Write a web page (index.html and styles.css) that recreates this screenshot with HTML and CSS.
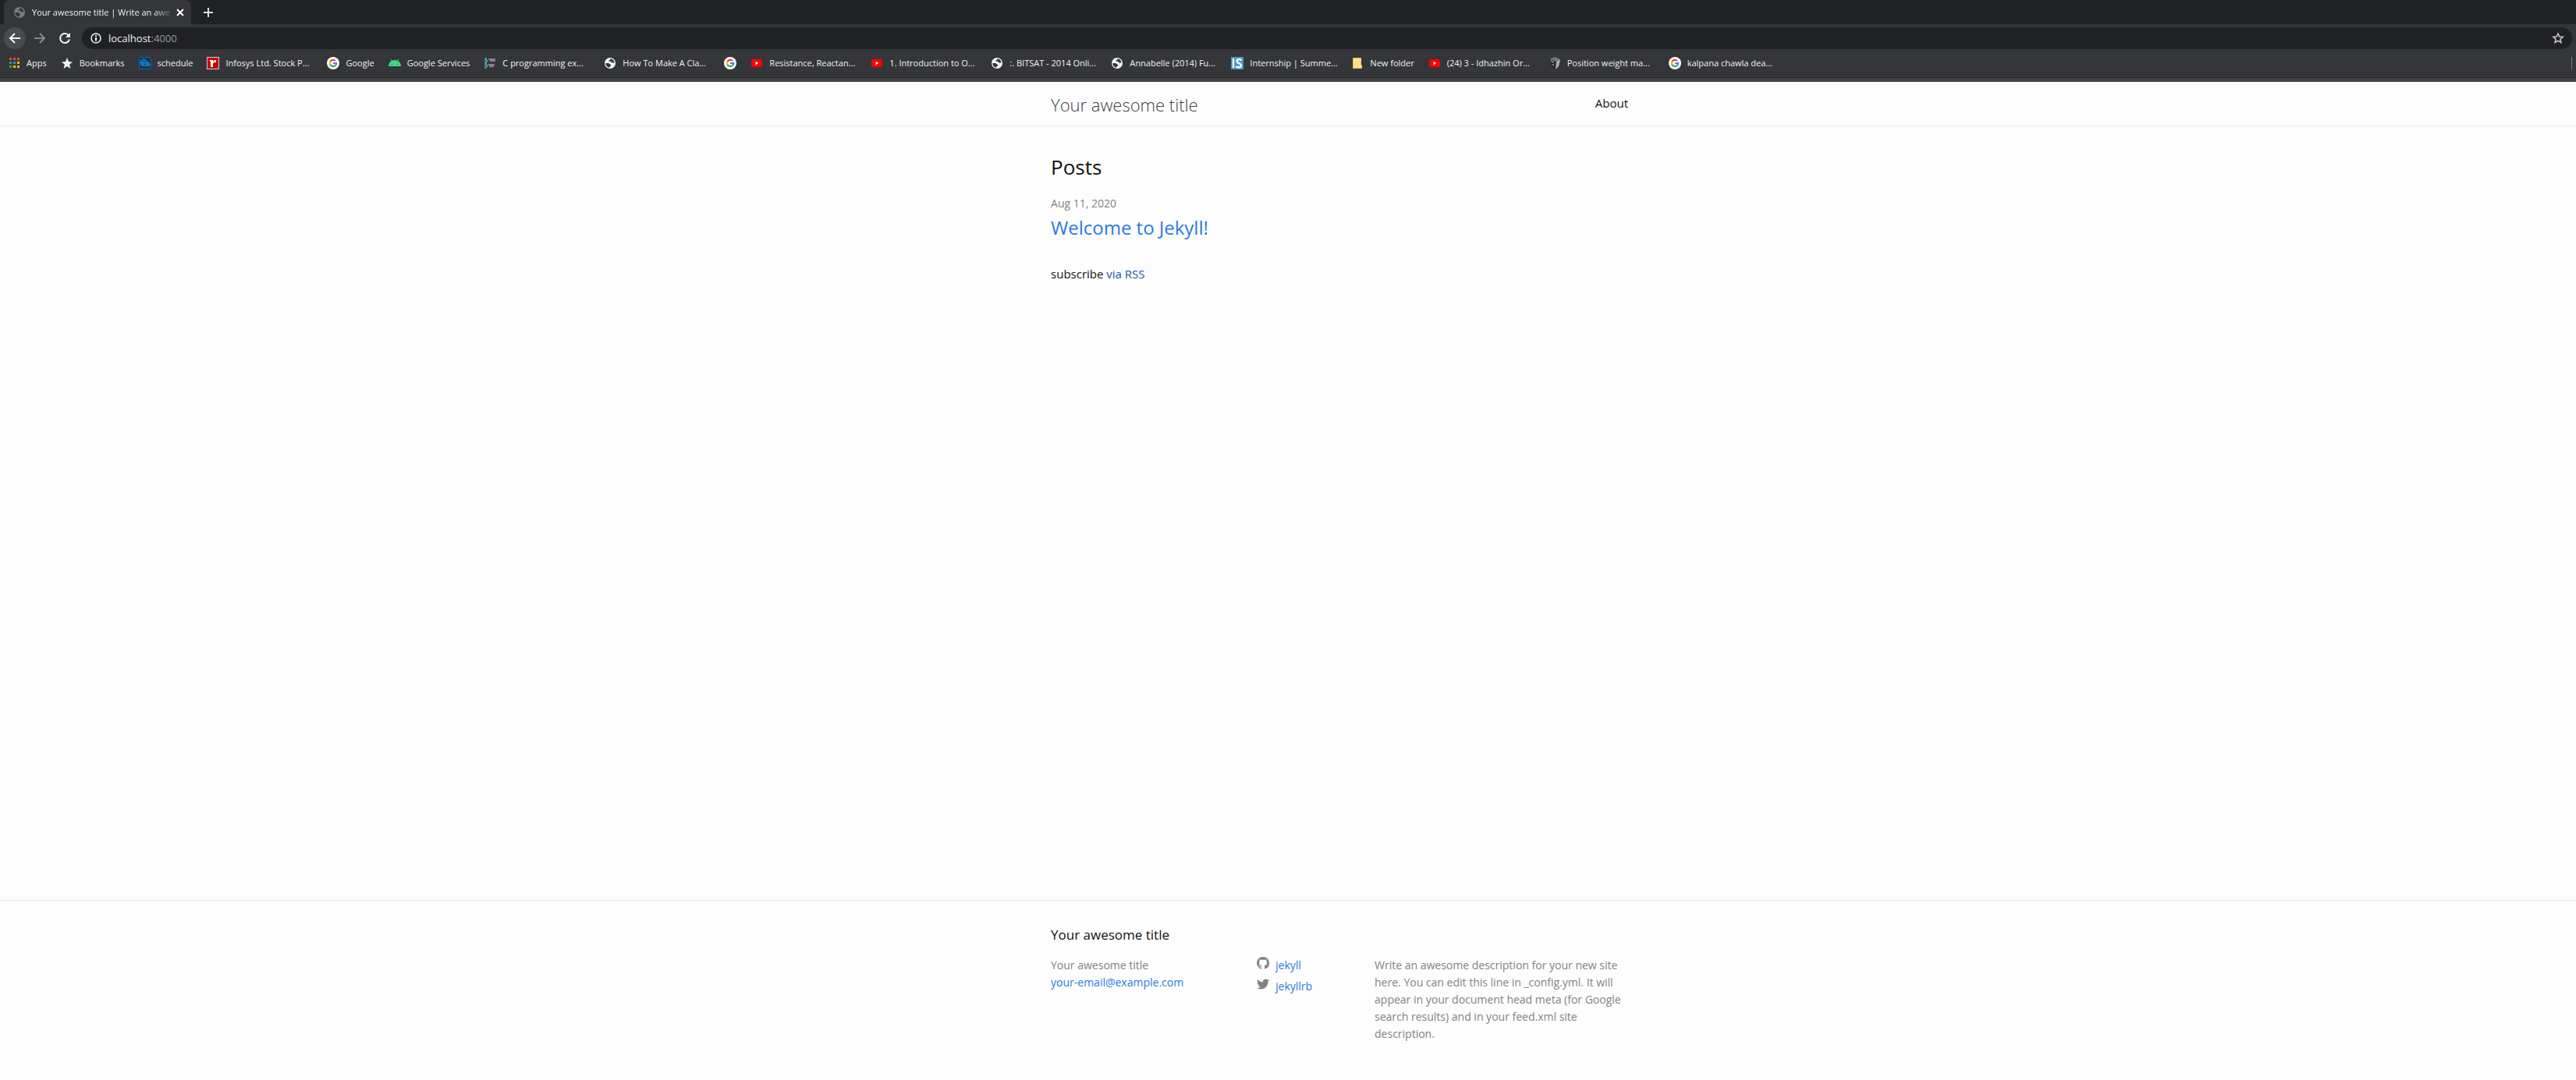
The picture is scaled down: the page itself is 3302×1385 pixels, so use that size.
FILE: index.html
```html
<!DOCTYPE html>
<html lang="en">
<head>
<meta charset="utf-8">
<title>Your awesome title | Write an awesome description</title>
<link rel="stylesheet" href="styles.css">
</head>
<body>
<svg class="sprite" aria-hidden="true">
  <symbol id="google" viewBox="0 0 16 16"><circle cx="8" cy="8" r="8" fill="#fff"/><g fill="none" stroke-width="2.2"><path d="M4.3 6.2A4.2 4.2 0 0 1 11 5" stroke="#ea4335"/><path d="M4.3 6.1a4.2 4.2 0 0 0 0 3.8" stroke="#fbbc05"/><path d="M4.3 9.8A4.2 4.2 0 0 0 10.8 11" stroke="#34a853"/><path d="M8 8h4.2a4.2 4.2 0 0 1-1.5 3.1" stroke="#4285f4"/></g></symbol>
  <symbol id="globe" viewBox="0 0 16 16"><circle cx="8" cy="8" r="7" fill="currentColor"/><path d="M2.2 8h3.6c1.500 0 1.600 1.800 3.200 1.800v2c-1.200 0-1.700.5-1.700 1.900C4.500 13.400 2.300 11 2.200 8zM8.400 2.300c0 1.500-.4 2-1.900 2v1.500h3.200v1.800h3.800C13.500 5 11.400 2.500 8.400 2.300z" class="globe-land"/></symbol>
  <symbol id="youtube" viewBox="0 0 16 16"><rect x="1" y="3" width="14" height="10" rx="2" fill="#f00"/><path d="M6.500 5.800v4.400L10.300 8z" fill="#fff"/></symbol>
</svg>

<div class="browser">
  <div class="tabs">
    <div class="tab">
      <svg class="icon tab-icon"><use href="#globe"/></svg>
      <span class="tab-title">Your awesome title | Write an awe</span>
      <button class="plain" aria-label="Close tab"><svg width="10" height="10" viewBox="0 0 10 10"><path d="M1 1l8 8M9 1L1 9" stroke="#fff" stroke-width="2"/></svg></button>
    </div>
    <button class="plain new-tab" aria-label="New tab"><svg width="12" height="12" viewBox="0 0 12 12"><path d="M6 0v12M0 6h12" stroke="#ddd" stroke-width="2"/></svg></button>
  </div>
  <div class="toolbar">
    <button class="plain nav active" aria-label="Back"><svg class="icon" viewBox="0 0 16 16"><path d="M15 8H2M8 2L2 8l6 6" fill="none" stroke="#f1f3f4" stroke-width="2"/></svg></button>
    <button class="plain nav" aria-label="Forward"><svg class="icon" viewBox="0 0 16 16"><path d="M1 8h13M8 2l6 6-6 6" fill="none" stroke="#87888a" stroke-width="2"/></svg></button>
    <button class="plain nav" aria-label="Reload"><svg class="icon" viewBox="0 0 16 16"><path d="M13 4.500A6 6 0 1 0 14 9.500" fill="none" stroke="#f1f3f4" stroke-width="2"/><path d="M15 1v6H9z" fill="#f1f3f4"/></svg></button>
    <div class="address">
      <svg class="icon" viewBox="0 0 16 16"><circle cx="8" cy="8" r="6" fill="none" stroke="#f1f3f4" stroke-width="1.500"/><path d="M8 7v4.500M8 4.300v1.700" stroke="#f1f3f4" stroke-width="2"/></svg>
      <a class="url" href="#">localhost<span class="port">:4000</span></a>
      <button class="plain" aria-label="Bookmark this page"><svg class="icon" viewBox="0 0 16 16"><path d="M8 2l1.800 4 4.400.4-3.300 2.900 1 4.200L8 11.300l-3.900 2.200 1-4.200-3.300-2.900 4.400-.4z" fill="none" stroke="#ccc" stroke-width="1.500"/></svg></button>
    </div>
  </div>
  <nav class="bookmarks" aria-label="Bookmarks">
    <a href="#"><svg class="icon" viewBox="0 0 16 16"><path d="M2 1h3v3H2zM7 1h3v3H7zM12 1h3v3h-3z" fill="#ea4335"/><path d="M2 6h3v3H2zM2 11h3v3H2z" fill="#34a853"/><path d="M7 6h3v3H7z" fill="#4285f4"/><path d="M12 6h3v3h-3zM7 11h3v3H7zM12 11h3v3h-3z" fill="#fbbc05"/></svg><span>Apps</span></a>
    <a href="#"><svg class="icon" viewBox="0 0 16 16"><path d="M8 1l2 5 5 .4-3.900 3.300L12.400 15 8 12l-4.400 3 1.300-5.300L1 6.400 6 6z" fill="#f1f3f4"/></svg><span>Bookmarks</span></a>
    <a href="#"><svg class="icon" viewBox="0 0 16 16"><rect x=".5" y=".5" width="15" height="15" rx="2" fill="#1c3348" stroke="#0b6aa8"/><path d="M1.500 7C2 3 6 1.500 8.500 3.500 10 5 12 5.500 13 7c1.500 1.500 1.500 4 .5 5H6C3 12 1.500 10 1.500 7z" fill="#0a7cc4"/><path d="M4 5.500c2-1 4 0 5 2M6 9.500h3" stroke="#1c3348" fill="none"/></svg><span>schedule</span></a>
    <a class="long" href="#"><svg class="icon" viewBox="0 0 16 16"><rect width="16" height="16" fill="#ccc"/><rect x="1" y="1" width="14" height="14" fill="#c00"/><path d="M4 4h4v2c1-2 2-2 4-2v3c-2 0-4 0-4 2v4H5V6H4z" fill="#fff"/></svg><span>Infosys Ltd. Stock P...</span></a>
    <a href="#"><svg class="icon"><use href="#google"/></svg><span>Google</span></a>
    <a href="#"><svg class="icon" viewBox="0 0 16 16"><path d="M0 12a8 8 0 0 1 16 0z" fill="#3ddc84"/><path d="M3 3l2 3M13 3l-2 3" stroke="#3ddc84"/><path d="M4 9h1v1H4zM11 9h1v1h-1z" fill="#35363a"/></svg><span>Google Services</span></a>
    <a class="long" href="#"><svg class="icon" viewBox="0 0 16 16"><path d="M1 1h3v14H1z" fill="#297f9d"/><path d="M2 2l3 3-3 3 3 3-2 3" stroke="#9cb6c0" fill="none"/><path d="M6 3h9M8 5h7M6 10h8M7 12h6" stroke="#858585" stroke-width="2"/></svg><span>C programming ex...</span></a>
    <a class="long" href="#"><svg class="icon"><use href="#globe"/></svg><span>How To Make A Cla...</span></a>
    <a href="#" aria-label="Google"><svg class="icon"><use href="#google"/></svg></a>
    <a class="long" href="#"><svg class="icon"><use href="#youtube"/></svg><span>Resistance, Reactan...</span></a>
    <a class="long" href="#"><svg class="icon"><use href="#youtube"/></svg><span>1. Introduction to O...</span></a>
    <a class="long" href="#"><svg class="icon"><use href="#globe"/></svg><span>:. BITSAT - 2014 Onli...</span></a>
    <a class="long" href="#"><svg class="icon"><use href="#globe"/></svg><span>Annabelle (2014) Fu...</span></a>
    <a class="long" href="#"><svg class="icon" viewBox="0 0 16 16"><rect width="16" height="16" fill="#4a98c5"/><path d="M3 2v12M13.500 4.500C12 2.500 7.500 2.500 7.500 5.500S13 8 13 11s-5 3-6.500 1" fill="none" stroke="#fff" stroke-width="2.300"/></svg><span>Internship | Summe...</span></a>
    <a href="#"><svg class="icon" viewBox="0 0 16 16"><path d="M2.500 1.500h10v9h1v4h-11z" fill="#ffe08a" stroke="#f0c64a"/></svg><span>New folder</span></a>
    <a class="long" href="#"><svg class="icon"><use href="#youtube"/></svg><span>(24) 3 - Idhazhin Or...</span></a>
    <a class="long" href="#"><svg class="icon" viewBox="0 0 16 16"><path d="M1 3l7-3 7 3-5 3z" fill="#777"/><path d="M1 3l9 3-1 10-5-4z" fill="#2b2b2b"/><path d="M10 6l5-3-2 9-4 4z" fill="#aaa"/><path d="M3 5l4 2M5 9l2 2M12 7l1-1" stroke="#ddd"/></svg><span>Position weight ma...</span></a>
    <a class="long" href="#"><svg class="icon"><use href="#google"/></svg><span>kalpana chawla dea...</span></a>
    <span class="divider"></span>
  </nav>
</div>

<header class="site-header">
  <div class="wrapper header-row">
    <a class="site-title" href="#">Your awesome title</a>
    <a class="page-link" href="#">About</a>
  </div>
</header>

<main>
  <div class="wrapper">
    <h2 class="list-heading">Posts</h2>
    <p class="date">Aug 11, 2020</p>
    <h3 class="post-title"><a href="#">Welcome to Jekyll!</a></h3>
    <p class="subscribe">subscribe <a href="#">via RSS</a></p>
  </div>
</main>

<footer class="site-footer">
  <div class="wrapper">
    <h2 class="footer-heading">Your awesome title</h2>
    <div class="footer-cols">
      <div class="contact">Your awesome title<br><a href="#">your-email@example.com</a></div>
      <div class="social">
        <a href="#"><svg class="icon" viewBox="0 0 16 16"><path fill="#828282" d="M8 0C3.580 0 0 3.580 0 8c0 3.540 2.290 6.530 5.470 7.590.4.070.55-.17.55-.38 0-.19-.01-.82-.01-1.490-2.010.37-2.530-.49-2.690-.94-.09-.23-.48-.94-.82-1.130-.28-.15-.68-.52-.01-.53.63-.01 1.080.58 1.230.82.72 1.210 1.870.87 2.330.66.07-.52.28-.87.51-1.070-1.780-.2-3.640-.89-3.640-3.950 0-.87.31-1.590.82-2.150-.08-.2-.36-1.020.08-2.120 0 0 .67-.21 2.200.82.64-.18 1.320-.27 2-.27s1.360.09 2 .27c1.530-1.040 2.200-.82 2.200-.82.44 1.100.16 1.920.08 2.120.51.56.82 1.270.82 2.150 0 3.070-1.870 3.750-3.650 3.950.29.25.54.73.54 1.480 0 1.070-.01 1.930-.01 2.200 0 .21.15.46.55.38A8.010 8.010 0 0 0 16 8c0-4.420-3.580-8-8-8z"/></svg><span>jekyll</span></a>
        <a href="#"><svg class="icon" viewBox="0 0 16 16"><path fill="#828282" d="M16 3.040c-.59.26-1.220.44-1.890.52.68-.41 1.200-1.050 1.440-1.820-.63.38-1.340.65-2.080.8A3.280 3.280 0 0 0 7.880 5.530 9.320 9.320 0 0 1 1.110 2.100a3.280 3.280 0 0 0 1.020 4.380c-.54-.02-1.040-.17-1.490-.41v.04c0 1.590 1.130 2.920 2.630 3.220-.48.13-.98.15-1.480.06.42 1.300 1.630 2.250 3.070 2.280A6.590 6.590 0 0 1 0 13.030a9.290 9.290 0 0 0 5.030 1.470c6.040 0 9.340-5 9.340-9.340v-.42c.64-.46 1.200-1.040 1.630-1.700z"/></svg><span>jekyllrb</span></a>
      </div>
      <p class="description">Write an awesome description for your new site here. You can edit this line in _config.yml. It will appear in your document head meta (for Google search results) and in your feed.xml site description.</p>
    </div>
  </div>
</footer>
</body>
</html>
```
FILE: styles.css
```css
* { box-sizing: border-box; }
body {
  margin: 0;
  min-height: 100vh;
  display: flex;
  flex-direction: column;
  background: #fdfdfd;
  color: #111;
  font: 15px/22px "Open Sans", "Noto Sans", sans-serif;
}
h2, h3, p { margin: 0; font-weight: 400; }
a { color: #2a7ae2; text-decoration: none; }
.sprite { display: none; }
.icon { width: 16px; height: 16px; flex: none; }
.plain { display: flex; padding: 0; border: 0; background: none; }

.browser {
  background: #35363a;
  border-bottom: 1px solid #232427;
  color: #f1f3f4;
  font: 11px/16px "Open Sans", "Noto Sans", sans-serif;
}
.tabs { display: flex; align-items: center; height: 31px; background: #202124; }
.tab {
  display: flex;
  align-items: center;
  gap: 8px;
  width: 240px;
  height: 31px;
  margin-left: 5px;
  padding: 0 12px 0 12px;
  background: #35363a;
  border-radius: 8px 8px 0 0;
}
.tab-icon { color: #7b7c7f; }
.globe-land { fill: #35363a; }
.tab-title {
  flex: 1;
  white-space: nowrap;
  mask-image: linear-gradient(to right, #000 88%, #0003);
}
.new-tab { margin-left: 16px; }
.toolbar { display: flex; align-items: center; gap: 4px; height: 36px; padding: 0 5px; }
.nav { width: 28px; height: 28px; align-items: center; justify-content: center; border-radius: 50%; }
.active { background: #4a4b4f; }
.address {
  display: flex;
  flex: 1;
  align-items: center;
  gap: 8px;
  height: 28px;
  margin-left: 4px;
  padding: 0 10px;
  border-radius: 14px;
  background: #202124;
}
.url { flex: 1; color: #f1f3f4; font-size: 13px; }
.port { color: #9a9b9e; }
.bookmarks { display: flex; align-items: center; gap: 18px; height: 32px; padding: 0 5px 4px 10px; white-space: nowrap; }
.bookmarks a { display: flex; gap: 8px; color: #f1f3f4; }
.bookmarks .long { width: 136px; }
.divider { width: 1px; height: 16px; margin-left: auto; background: #77787b; }

.wrapper { width: 740px; max-width: 100%; margin: 0 auto; }
.site-header, main, .site-footer { padding-left: 4%; }
.site-header { border-top: 5px solid #424242; border-bottom: 1px solid #e8e8e8; }
.header-row { display: flex; justify-content: space-between; height: 56px; line-height: 54px; }
.site-title { color: #424242; font-size: 22px; font-weight: 300; line-height: 58px; }
.page-link { color: #111; }

main { flex: 1; padding-top: 34px; }
.list-heading { font-size: 26px; line-height: 36px; }
.date { margin-top: 18px; color: #828282; font-size: 14px; }
.post-title { font-size: 24px; line-height: 40px; }
.subscribe { margin-top: 28px; }
.subscribe a { color: #1756a9; }

.site-footer { padding-top: 32px; padding-bottom: 48px; border-top: 1px solid #e8e8e8; color: #828282; font-size: 14px; }
.footer-heading { margin-bottom: 16px; color: #111; font-size: 17px; line-height: 24px; }
.footer-cols { display: grid; grid-template-columns: 264px 151px 1fr; }
.social { display: flex; flex-direction: column; gap: 5px; }
.social a { display: flex; gap: 8px; }
```
